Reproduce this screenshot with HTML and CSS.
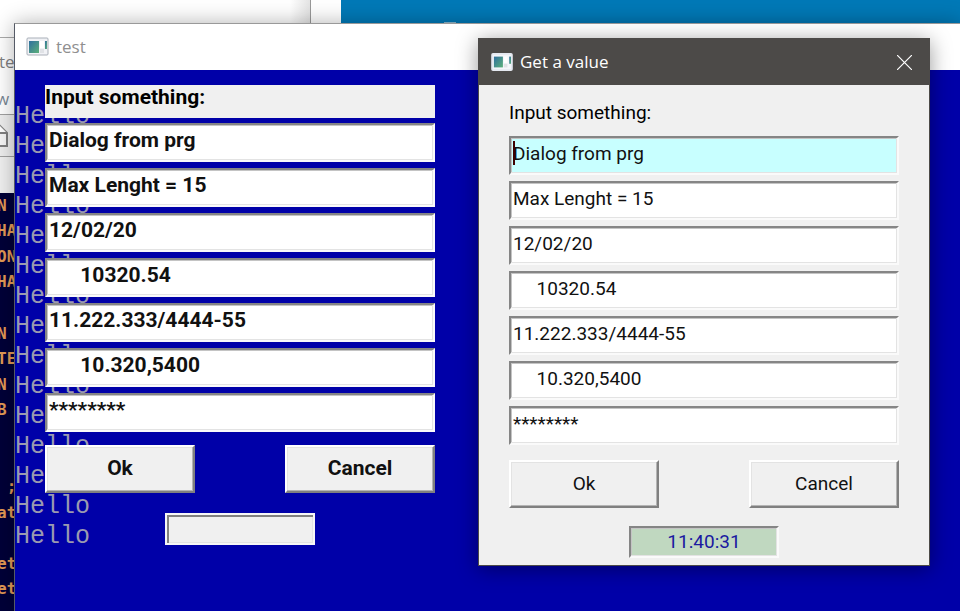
FILE: index.html
```
<!DOCTYPE html>
<html lang="en">
<head>
    <meta charset="UTF-8">
    <meta name="viewport" content="width=device-width, initial-scale=1.0">
    <title>Get a value</title>
    <link rel="stylesheet" href="styles.css">
</head>
<body>
    <div class="desktop">

        <!-- Windows in the background -->
        <div class="browser">
            <div class="banner"><span class="banner-mark"></span></div>
        </div>
        <div class="blank-window"></div>
        <div class="editor">
            <div class="editor-title">te</div>
            <div class="editor-menu">w</div>
            <div class="editor-tools">
                <svg width="24" height="24" viewBox="0 0 24 24">
                    <path d="M0 1h14l8 8v13H0" fill="#f7f7f7" stroke="#808080" stroke-width="2"/>
                    <path d="M14 1v8h8" fill="#fff" stroke="#808080" stroke-width="2"/>
                </svg>
            </div>
            <div class="editor-tabs"></div>
            <div class="code">
                <span>N</span>
                <span>HA</span>
                <span>ON</span>
                <span>HA</span>
                <span></span>
                <span>N</span>
                <span>TE</span>
                <span>N</span>
                <span>B</span>
                <span></span>
                <span></span>
                <span class="end">;</span>
                <span>at</span>
                <span></span>
                <span>et</span>
                <span>et</span>
            </div>
        </div>

        <!-- Main window -->
        <section class="window main-window">
            <header class="titlebar">
                <svg class="app-icon" width="24" height="20" viewBox="0 0 24 20">
                    <defs>
                        <linearGradient id="pane" x1="0" y1="0" x2="1" y2="1">
                            <stop offset="0" stop-color="#2f6f9f"/>
                            <stop offset="1" stop-color="#5cb07a"/>
                        </linearGradient>
                    </defs>
                    <rect x="1" y="1" width="21" height="17" rx="1" fill="#f1f2f6" stroke="#a9afb8"/>
                    <rect x="3" y="4" width="10" height="12" fill="url(#pane)"/>
                    <rect x="14" y="4" width="4" height="7" fill="#fff"/>
                    <rect x="19" y="4" width="2" height="8" fill="url(#pane)"/>
                    <rect x="14" y="12" width="4" height="4" fill="#e0e2e6"/>
                </svg>
                <h1>test</h1>
            </header>
            <div class="client">
                <pre class="console">
Hello
Hello
Hello
Hello
Hello
Hello
Hello
Hello
Hello
Hello
Hello
Hello
Hello
Hello
Hello</pre>
                <form class="form bold-form">
                    <label class="prompt" for="main-text">Input something:</label>
                    <div class="fields">
                        <input id="main-text" type="text" value="Dialog from prg">
                        <input type="text" aria-label="Max length" value="Max Lenght = 15">
                        <input type="text" aria-label="Date" value="12/02/20">
                        <input type="text" aria-label="Number" value="      10320.54">
                        <input type="text" aria-label="Code" value="11.222.333/4444-55">
                        <input type="text" aria-label="Amount" value="      10.320,5400">
                        <input type="text" class="secret" aria-label="Password" value="********">
                    </div>
                    <div class="buttons">
                        <button type="button">Ok</button>
                        <button type="button">Cancel</button>
                    </div>
                    <output class="status"></output>
                </form>
            </div>
        </section>

        <!-- Dialog -->
        <section class="window dialog">
            <header class="titlebar">
                <svg class="app-icon" width="22" height="18" viewBox="0 0 24 20">
                    <rect x="1" y="1" width="22" height="18" rx="1" fill="#f4f6fa" stroke="#e4e8f0" stroke-width="2"/>
                    <rect x="3" y="4" width="10" height="12" fill="url(#pane)"/>
                    <rect x="14" y="4" width="4" height="7" fill="#fff"/>
                    <rect x="20" y="4" width="2" height="8" fill="url(#pane)"/>
                    <rect x="14" y="12" width="4" height="4" fill="#e0e2e6"/>
                </svg>
                <h2>Get a value</h2>
                <button type="button" class="close" aria-label="Close">
                    <svg width="15" height="15" viewBox="0 0 15 15">
                        <path d="M0 0l15 15M15 0L0 15" stroke="#fff" stroke-width="1.2"/>
                    </svg>
                </button>
            </header>
            <form class="form">
                <label class="prompt" for="dialog-text">Input something:</label>
                <div class="fields">
                    <div class="focused">
                        <input id="dialog-text" type="text" value="Dialog from prg">
                        <span class="caret"></span>
                    </div>
                    <input type="text" aria-label="Max length" value="Max Lenght = 15">
                    <input type="text" aria-label="Date" value="12/02/20">
                    <input type="text" aria-label="Number" value="     10320.54">
                    <input type="text" aria-label="Code" value="11.222.333/4444-55">
                    <input type="text" aria-label="Amount" value="     10.320,5400">
                    <input type="text" class="secret" aria-label="Password" value="********">
                </div>
                <div class="buttons">
                    <button type="button">Ok</button>
                    <button type="button">Cancel</button>
                </div>
                <output class="status clock">11:40:31</output>
            </form>
        </section>

    </div>
</body>
</html>
```

FILE: styles.css
```
* {
    margin: 0;
    padding: 0;
    box-sizing: border-box;
}

body {
    font-family: Roboto, "Liberation Sans", sans-serif;
    background: #fff;
    color: #000;
}

.desktop {
    position: relative;
    height: 100vh;
    overflow: hidden;
}

/* Background windows */
.browser {
    position: absolute;
    top: 0;
    left: 310px;
    right: 0;
    height: 60px;
    padding-left: 31px;
    background: #fff;
}

.banner {
    display: flex;
    align-items: flex-end;
    height: 24px;
    padding-left: 103px;
    background: #0079b7;
}

.banner-mark {
    width: 12px;
    height: 2px;
    background: #8ab8cf;
}

.blank-window {
    position: absolute;
    top: 0;
    left: 0;
    width: 311px;
    height: 60px;
    background: linear-gradient(to right, #fff 290px, #e4e4e4);
    border-right: 1px solid #999;
}

.editor {
    position: absolute;
    top: 37px;
    bottom: 0;
    left: 0;
    width: 15px;
    display: flex;
    flex-direction: column;
    overflow: hidden;
    background: #fff;
    border-top: 1px solid #aaa;
    color: #808080;
    font-family: "Open Sans", sans-serif;
    font-size: 17px;
}

.editor-title {
    height: 48px;
    line-height: 48px;
    margin-left: -1px;
}

.editor-menu {
    height: 28px;
    line-height: 26px;
    margin-left: -4px;
    color: #7a8794;
}

.editor-tools {
    display: flex;
    justify-content: flex-end;
    align-items: center;
    height: 43px;
    padding-right: 6px;
    background: #eee;
    border-top: 1px solid #a0a0a0;
    border-bottom: 1px solid #a0a0a0;
}

.editor-tools svg {
    flex: none;
}

.editor-tabs {
    height: 36px;
    background: #f0f0f0;
}

.code {
    flex: 1;
    display: grid;
    grid-auto-rows: 1fr;
    align-items: center;
    justify-items: start;
    padding-bottom: 9px;
    margin-left: -3px;
    background: #000038;
    color: #e39a55;
    font: bold 16px/20px "DejaVu Sans Mono", monospace;
}

.code .end {
    justify-self: end;
}

/* Windows */
.window {
    position: absolute;
    display: flex;
    flex-direction: column;
}

.titlebar {
    display: flex;
    align-items: center;
    height: 46px;
    flex: none;
}

.titlebar h1,
.titlebar h2 {
    font: 17px/24px "Open Sans", "Noto Sans", sans-serif;
}

.main-window {
    top: 23px;
    right: 0;
    bottom: 0;
    left: 14px;
    border-top: 1px solid #999;
    border-left: 1px solid #555a66;
    box-shadow: 0 0 20px rgba(0, 0, 0, 0.3);
}

.main-window .titlebar {
    gap: 6px;
    padding-left: 11px;
    background: #fff;
    color: #8f8f8f;
}

.client {
    position: relative;
    flex: 1;
    padding: 15px 30px;
    overflow: hidden;
    background: #0000a8;
}

.console {
    position: absolute;
    top: 32px;
    left: 0;
    color: #9a9ab0;
    font: 25px/30px "Liberation Mono", monospace;
}

.dialog {
    top: 38px;
    left: 478px;
    width: 452px;
    background: #f0f0f0;
    border: 1px solid #4c4a48;
    box-shadow: 0 3px 20px rgba(0, 0, 0, 0.4);
}

.dialog .titlebar {
    gap: 7px;
    padding: 0 17px 0 12px;
    background: #4c4a48;
    color: #fff;
}

.close {
    display: flex;
    margin-left: auto;
    background: none;
    border: none;
}

/* Forms */
.form {
    position: relative;
    display: flex;
    flex-direction: column;
    width: 390px;
    font-size: 19px;
}

.dialog .form {
    width: auto;
    padding: 15px 30px 7px;
}

.prompt {
    height: 33px;
    margin-bottom: 5px;
    line-height: 25px;
}

.dialog .prompt {
    margin-bottom: 3px;
}

.fields {
    display: flex;
    flex-direction: column;
    gap: 6px;
}

.form input,
.form .status {
    border: 2px solid;
    border-color: #858585 #fafafa #fafafa #858585;
    box-shadow: inset -1px -1px #e3e3e3, inset 1px 1px #c4c4c4;
}

.form input {
    display: block;
    width: 100%;
    height: 39px;
    padding: 0 2px 5px;
    background: #fff;
    color: #111;
    font: inherit;
    outline: none;
}

.focused {
    position: relative;
}

.focused input {
    background: #c8ffff;
}

.caret {
    position: absolute;
    top: 5px;
    left: 4px;
    width: 2px;
    height: 24px;
    background: #400000;
}

.buttons {
    display: flex;
    justify-content: space-between;
    margin-top: 13px;
}

.buttons button {
    width: 150px;
    height: 48px;
    padding-bottom: 2px;
    background: #f0f0f0;
    border: 2px solid;
    border-color: #fff #808080 #808080 #fff;
    box-shadow: inset -1px -1px #b4b4b4, inset 1px 1px #e3e3e3;
    color: #111;
    font: inherit;
}

.dialog .buttons {
    margin-top: 15px;
}

.form .status {
    align-self: center;
    width: 150px;
    height: 32px;
    margin-top: 20px;
    background: #f0f0f0;
    line-height: 28px;
    text-align: center;
}

.dialog .status {
    margin-top: 18px;
}

.form .clock {
    background: #c0d8c0;
    color: #1a1aa0;
}

.bold-form {
    font-size: 21px;
    font-weight: bold;
}

.bold-form .prompt {
    background: #f0f0f0;
}

.bold-form .status {
    border-color: #f6f6f6;
    box-shadow: inset 2px 2px #808080, inset -1px -1px #e3e3e3;
}
```
